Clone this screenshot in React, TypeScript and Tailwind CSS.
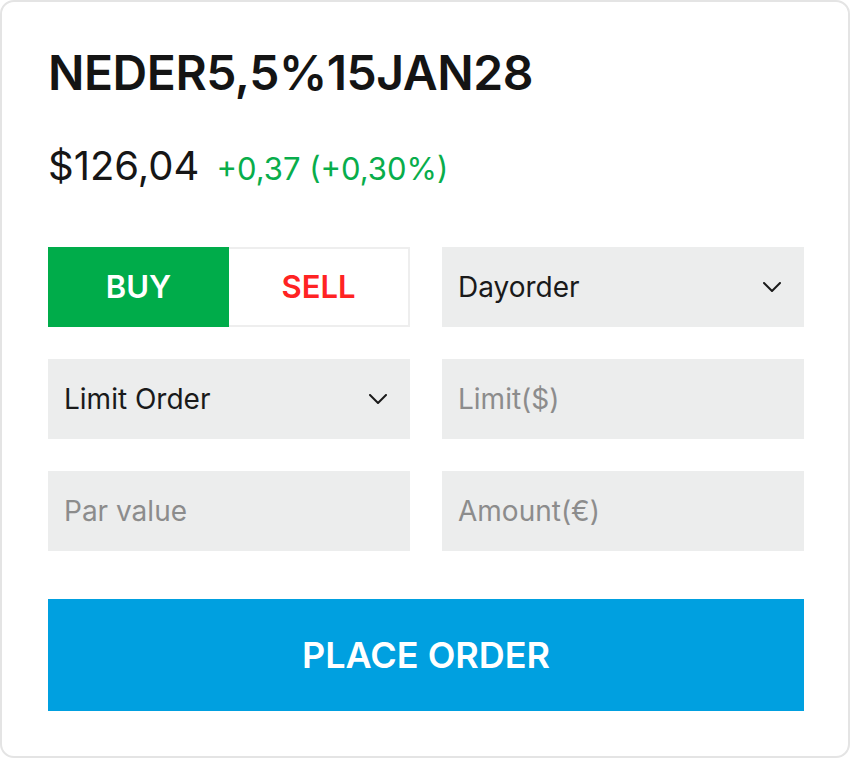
import React from "react";

const Chevron = () => (
  <svg width="18" height="10" viewBox="0 0 18 10" fill="none" className="shrink-0">
    <polyline points="1,1 9,9 17,1" stroke="#1a1a1a" strokeWidth="2" strokeLinecap="round" strokeLinejoin="round" />
  </svg>
);

export default function App() {
  return (
    <div className="w-[852px] h-[760px] bg-white" style={{ fontFamily: "Inter, 'Noto Sans', sans-serif" }}>
      <div className="w-[850px] h-[758px] border-2 border-[#e4e4e4] rounded-[14px] bg-white pl-[46px] pr-[44px] pt-[42px]">
        <h1 className="text-[48px] leading-[58px] font-semibold text-[#141414] tracking-[-0.45px]">NEDER5,5%15JAN28</h1>
        <div className="flex items-baseline mt-[40px] h-[48px]">
          <span className="text-[40px] leading-[48px] text-[#161616]">$126,04</span>
          <span className="text-[31px] leading-[48px] text-[#08ad4b] ml-[17px]">+0,37 (+0,30%)</span>
        </div>
        <div className="grid grid-cols-2 gap-x-[32px] gap-y-[32px] mt-[57px] w-[756px]">
          <div className="flex h-[80px]">
            <div className="w-[181px] bg-[#00ac4a] flex items-center justify-center text-white text-[31px] font-semibold">BUY</div>
            <div className="flex-1 border-2 border-[#eeeeee] border-l-0 flex items-center justify-center text-[#ff2323] text-[31px] font-semibold">SELL</div>
          </div>
          <div className="h-[80px] bg-[#eceded] flex items-center justify-between pl-[16px] pr-[23px] text-[28px] text-[#1a1a1a]">
            <span>Dayorder</span>
            <Chevron />
          </div>
          <div className="h-[80px] bg-[#eceded] flex items-center justify-between pl-[16px] pr-[23px] text-[28px] text-[#1a1a1a]">
            <span>Limit Order</span>
            <Chevron />
          </div>
          <div className="h-[80px] bg-[#eceded] flex items-center pl-[16px] text-[28px] text-[#8c8c8c]">
            <span>Limit($)</span>
          </div>
          <div className="h-[80px] bg-[#eceded] flex items-center pl-[16px] text-[28px] text-[#8c8c8c]">
            <span>Par value</span>
          </div>
          <div className="h-[80px] bg-[#eceded] flex items-center pl-[16px] text-[28px] text-[#8c8c8c]">
            <span>Amount(€)</span>
          </div>
        </div>
        <button className="mt-[48px] w-[756px] h-[112px] bg-[#00a0e0] text-white text-[36px] font-semibold flex items-center justify-center">
          PLACE ORDER
        </button>
      </div>
    </div>
  );
}
